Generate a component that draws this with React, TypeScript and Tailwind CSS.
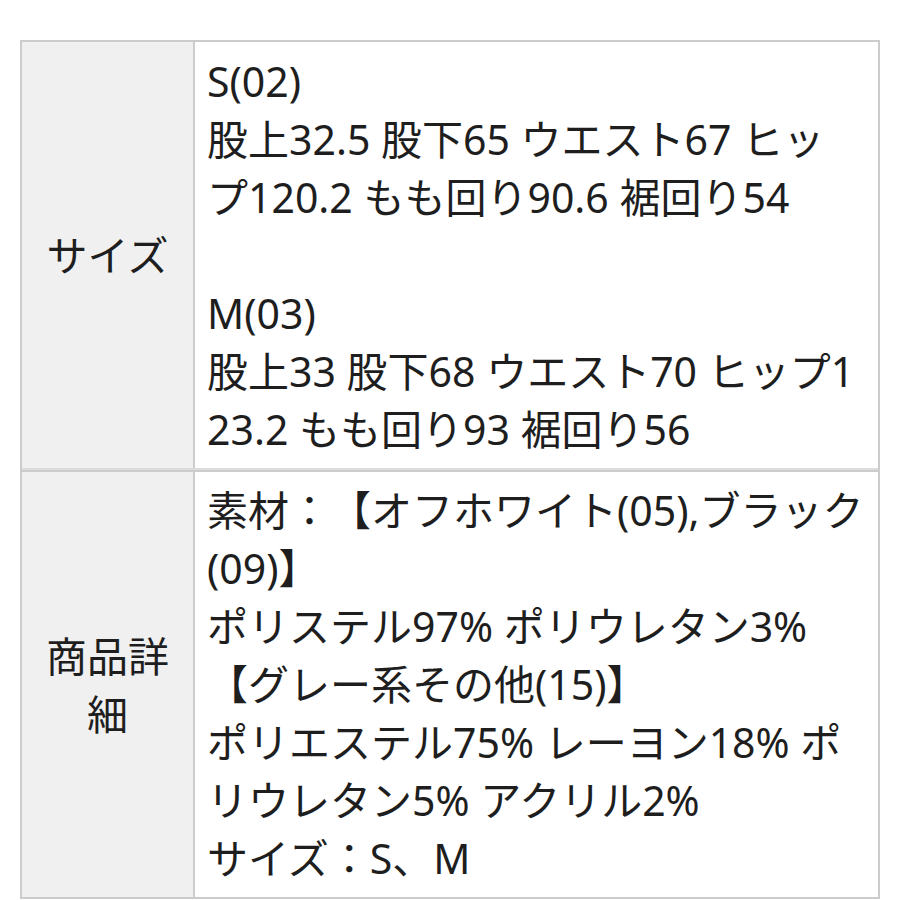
export default function App() {
  const row1 = [
    "S(02)",
    "股上32.5 股下65 ウエスト67 ヒッ",
    "プ120.2 もも回り90.6 裾回り54",
    "\u00a0",
    "M(03)",
    "股上33 股下68 ウエスト70 ヒップ1",
    "23.2 もも回り93 裾回り56",
  ];
  const row2 = [
    "素材：【オフホワイト(05),ブラック",
    "(09)】",
    "ポリステル97% ポリウレタン3%",
    "【グレー系その他(15)】",
    "ポリエステル75% レーヨン18% ポ",
    "リウレタン5% アクリル2%",
    "サイズ：S、M",
  ];
  return (
    <div
      className="w-[900px] h-[900px] bg-white overflow-hidden pt-[40px] pl-[20px] text-[#1e1e1e] [text-spacing-trim:space-all]"
      style={{ fontFamily: '"Noto Sans", "Noto Sans CJK JP", sans-serif' }}
    >
      <div className="w-[860px] border-2 border-[#cccccc]">
        <div className="flex border-b-2 border-[#dcdcdc]">
          <div className="w-[173px] shrink-0 bg-[#f0f0f0] border-r-2 border-[#cccccc] flex items-center justify-center text-center px-[10px] text-[41px] leading-[58px] whitespace-nowrap">
            サイズ
          </div>
          <div className="flex-1 pl-[12px] pt-[10px] pb-[10px] text-[41px] leading-[58px] whitespace-nowrap overflow-hidden">
            {row1.map((l, i) => (
              <div key={i}>{l}</div>
            ))}
          </div>
        </div>
        <div className="flex border-t-2 border-[#cccccc]">
          <div className="w-[173px] shrink-0 bg-[#f0f0f0] border-r-2 border-[#cccccc] flex items-center justify-center text-center px-[10px] text-[41px] leading-[58px] whitespace-nowrap">
            <div>
              <div>商品詳</div>
              <div>細</div>
            </div>
          </div>
          <div className="flex-1 pl-[12px] pt-[9px] pb-[10px] text-[41px] leading-[58px] whitespace-nowrap overflow-hidden">
            {row2.map((l, i) => (
              <div key={i}>{l}</div>
            ))}
          </div>
        </div>
      </div>
    </div>
  );
}
